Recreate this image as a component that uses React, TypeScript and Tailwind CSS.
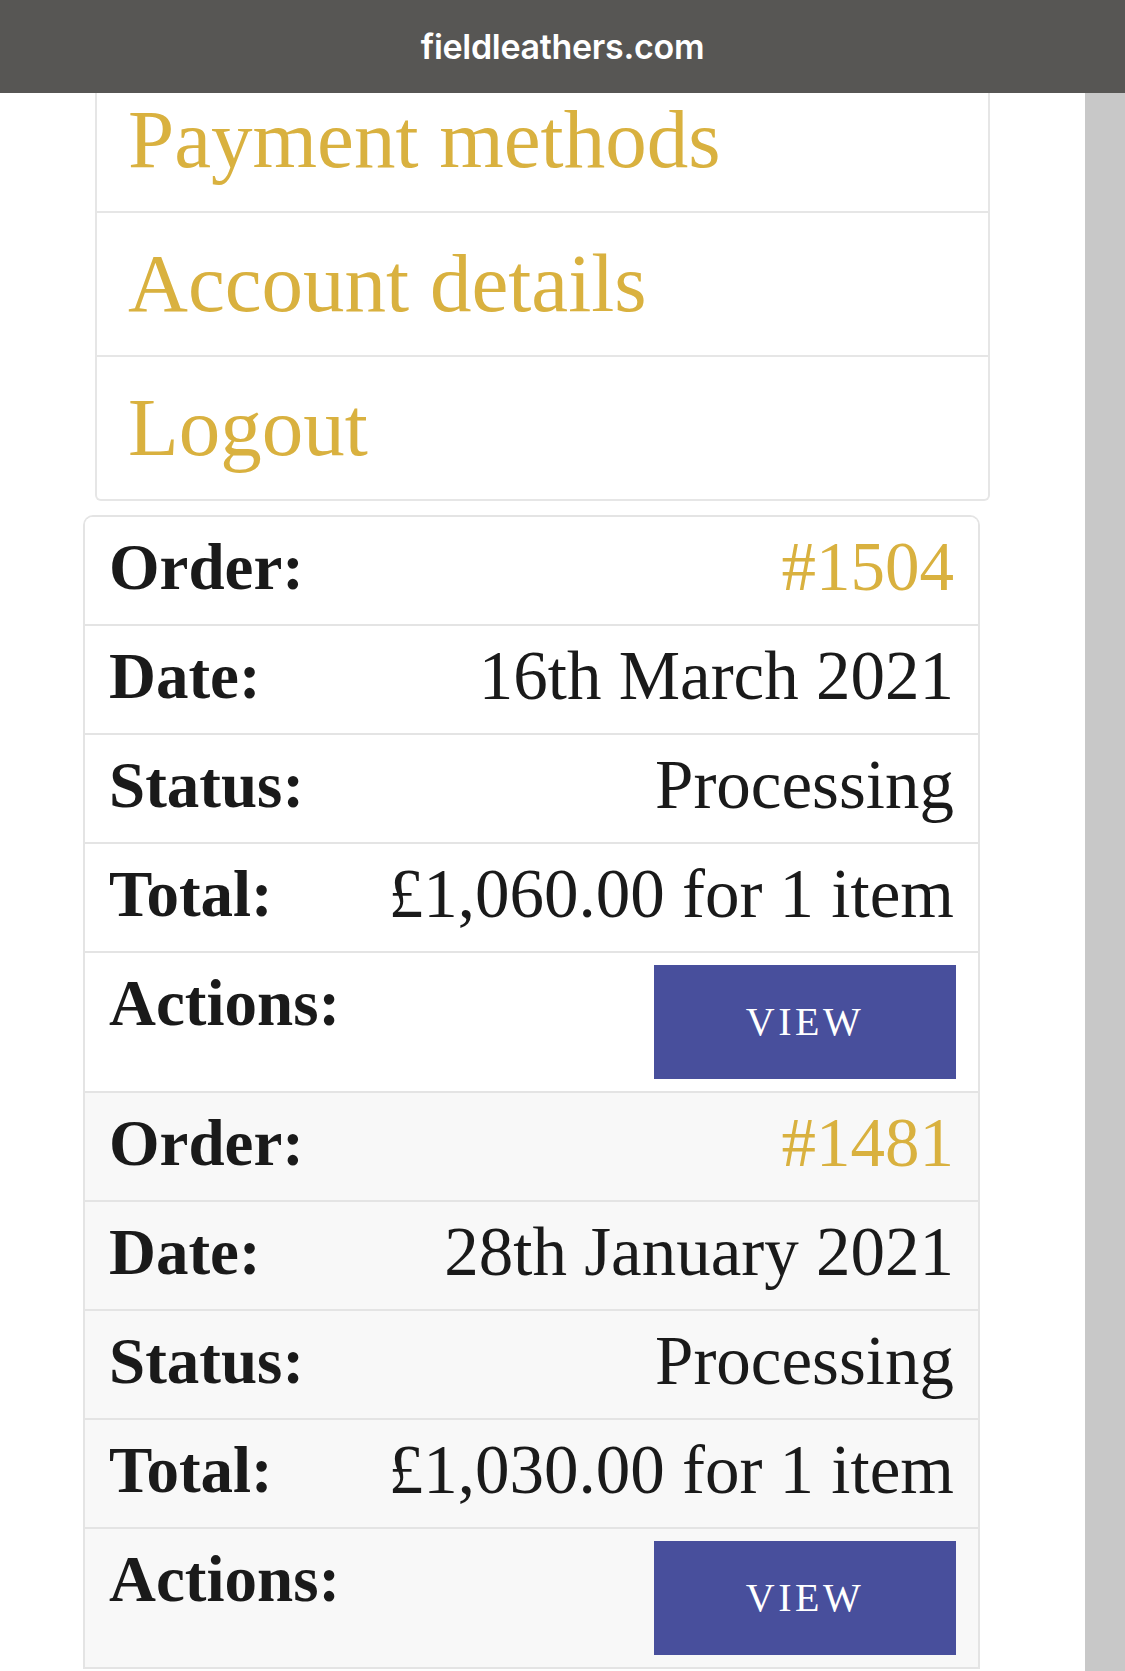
import React from 'react';

interface Order {
  id: string;
  date: string;
  status: string;
  total: string;
}

const orders: Order[] = [
  { id: '#1504', date: '16th March 2021', status: 'Processing', total: '£1,060.00 for 1 item' },
  { id: '#1481', date: '28th January 2021', status: 'Processing', total: '£1,030.00 for 1 item' },
];

const menuItems = ['Payment methods', 'Account details', 'Logout'];

const serif = "font-['Liberation_Serif','Times_New_Roman',serif]";

const Row: React.FC<{ label: string; children: React.ReactNode }> = ({ label, children }) => (
  <div className="flex items-start justify-between border-b-2 border-[#e4e4e4] pl-[24px] pr-[24px] pt-[10px] pb-[17px]">
    <span className="text-[65px] font-bold leading-[80px] text-[#1a1a1a]">{label}</span>
    <span className="text-[69px] leading-[80px] text-[#1a1a1a]">{children}</span>
  </div>
);

const OrderCard: React.FC<{ order: Order; shaded: boolean }> = ({ order, shaded }) => (
  <div className={shaded ? 'bg-[#f8f8f8]' : 'bg-white'}>
    <Row label="Order:">
      <a href="#" className="text-[#d9b13f]">{order.id}</a>
    </Row>
    <Row label="Date:">{order.date}</Row>
    <Row label="Status:">{order.status}</Row>
    <Row label="Total:">{order.total}</Row>
    <div className="flex items-start justify-between border-b-2 border-[#e4e4e4] pl-[24px] pr-[22px] pt-[10px] pb-[12px]">
      <span className="text-[65px] font-bold leading-[80px] text-[#1a1a1a]">Actions:</span>
      <button className="mt-[2px] flex h-[114px] w-[302px] items-center justify-center bg-[#484f9c] text-[40px] font-medium tracking-[3.5px] text-white">
        VIEW
      </button>
    </div>
  </div>
);

export default function App() {
  return (
    <div className="flex min-h-[1671px] w-[1125px] flex-col bg-white">
      <div className="flex h-[93px] items-center justify-center bg-[#575654]">
        <span className="font-['Inter',sans-serif] text-[34px] font-semibold tracking-[-0.3px] text-white">fieldleathers.com</span>
      </div>
      <div className="flex flex-1">
        <div className={`flex-1 overflow-hidden ${serif}`}>
          <div className="-mt-[24px] ml-[95px] w-[895px] rounded-b-[6px] border-x-2 border-b-2 border-[#e6e6e6]">
            {menuItems.map((item, i) => (
              <div
                key={item}
                className={`pl-[31px] pt-[22px] pb-[24px] text-[83px] leading-[96px] text-[#d9b13f] ${i < menuItems.length - 1 ? 'border-b-2 border-[#e6e6e6]' : ''}`}
              >
                {item}
              </div>
            ))}
          </div>
          <div className="mt-[14px] ml-[83px] w-[897px] overflow-hidden rounded-t-[10px] border-x-2 border-t-2 border-[#e4e4e4]">
            {orders.map((o, i) => (
              <OrderCard key={o.id} order={o} shaded={i % 2 === 1} />
            ))}
          </div>
        </div>
        <div className="w-[40px] bg-[#c8c8c8]" />
      </div>
    </div>
  );
}
